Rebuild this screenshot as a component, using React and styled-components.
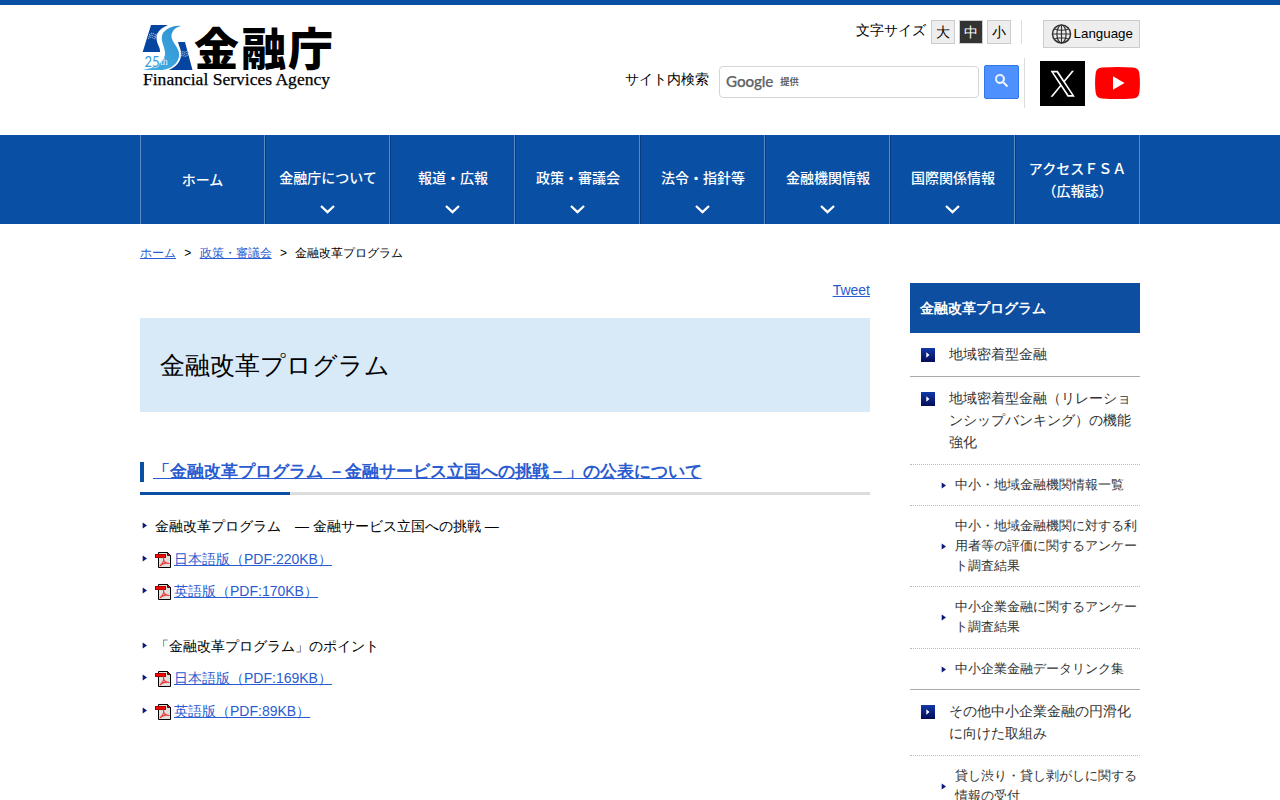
import React from "react";
import styled, { createGlobalStyle, css } from "styled-components";

const GlobalStyle = createGlobalStyle`
  * { box-sizing: border-box; }
  body {
    margin: 0;
    background: #fff;
    color: #000;
    font-family: "Liberation Sans", sans-serif;
    font-size: 14px;
    line-height: 22px;
    height: 800px;
    overflow: hidden;
  }
  ul, h1, h2, p { margin: 0; padding: 0; }
  ul { list-style: none; }
`;

const Page = styled.div`
  border-top: 5px solid #0950a4;
`;

const Container = styled.div`
  width: 1000px;
  margin: 0 auto;
`;

const Header = styled(Container)`
  display: flex;
  justify-content: space-between;
  align-items: flex-start;
  height: 130px;
`;

const Brand = styled.div`
  padding-top: 18px;
  svg { display: block; overflow: visible; }
`;

const HeaderTools = styled.div`
  display: flex;
  flex-direction: column;
  align-items: flex-end;
`;

const SizeRow = styled.div`
  display: flex;
  align-items: flex-start;
  padding-top: 15px;
  height: 53px;
`;

const SizeLabel = styled.span`
  margin-right: 5px;
  line-height: 21px;
`;

const SizeButton = styled.span`
  width: 24px;
  height: 24px;
  margin-right: 4px;
  border: 1px solid #ccc;
  background: ${(p) => (p.$active ? "#333" : "#eee")};
  color: ${(p) => (p.$active ? "#fff" : "#000")};
  text-align: center;
  line-height: 23px;
`;

const Rule = styled.span`
  width: 1px;
  height: ${(p) => p.$h}px;
  background: #ddd;
  margin: 0 ${(p) => p.$right}px 0 ${(p) => p.$left}px;
`;

const LanguageButton = styled.span`
  display: flex;
  align-items: center;
  width: 97px;
  height: 28px;
  padding-left: 7px;
  gap: 1.6px;
  border: 1px solid #ccc;
  background: #eee;
  font-size: 13.33px;
`;

const SearchRow = styled.div`
  display: flex;
  align-items: flex-start;
`;

const SearchLabel = styled.span`
  margin: 10px 10px 0 0;
`;

const SearchField = styled.span`
  display: flex;
  align-items: center;
  width: 260px;
  height: 32px;
  margin: 8px 5px 0 0;
  padding: 0 0 2px 6px;
  gap: 7px;
  border: 1px solid #d6d6d6;
  border-radius: 4px;
  color: #5f6368;
`;

const GoogleWord = styled.span`
  font: 500 15.2px/20px Lato, sans-serif;
  letter-spacing: -0.1px;
  -webkit-text-stroke: 0.25px #5f6368;
`;

const Provided = styled.span`
  font: 700 9.3px/20px "Noto Sans CJK JP", sans-serif;
`;

const SearchButton = styled.span`
  display: flex;
  justify-content: center;
  width: 35px;
  height: 34px;
  margin-top: 7px;
  padding-top: 8px;
  border: 1px solid #3079ed;
  border-radius: 2px;
  background: #4d90fe;
`;

const Social = styled.span`
  width: 45px;
  height: ${(p) => p.$h}px;
  margin: ${(p) => p.$top}px 0 0 ${(p) => p.$left}px;
  svg { display: block; }
`;

const NavBar = styled.nav`
  background: #0950a4;
`;

const NavList = styled.ul`
  display: flex;
  width: 1000px;
  height: 89px;
  margin: 0 auto;
`;

const NavItem = styled.li`
  display: flex;
  flex-direction: column;
  align-items: center;
  width: 125px;
  padding: ${(p) => p.$top}px 0 0 1px;
  border-left: 1px solid #073d7c;
  border-right: 1px solid #5b8ac2;
  color: #fff;
  font-family: "Noto Sans CJK JP", sans-serif;
  font-weight: 500;
  text-align: center;
  white-space: nowrap;
  &:first-child { border-left-color: #5b8ac2; padding-left: 0; }
  &:last-child { padding-left: 0; }
  svg { display: block; margin: 16px 1px 0 0; }
`;

const Link = styled.a`
  color: #2a5bd0;
  text-decoration: underline;
`;

const Breadcrumb = styled(Container)`
  display: flex;
  gap: 8.35px;
  padding-top: 18px;
  height: 59px;
  font-size: 12px;
`;

const Columns = styled(Container)`
  display: flex;
  gap: 40px;
  align-items: flex-start;
`;

const Main = styled.main`
  width: 730px;
`;

const Share = styled.p`
  height: 35px;
  line-height: 14px;
  text-align: right;
`;

const Title = styled.h1`
  height: 94px;
  padding-left: 20px;
  background: #d8e9f7;
  font-size: 25.2px;
  font-weight: 400;
  line-height: 94px;
`;

const SectionTitle = styled.h2`
  height: 45px;
  margin-top: 38px;
  padding-top: 12px;
  background: linear-gradient(to right, #0950a4 150px, #ddd 150px) bottom / 100% 3px no-repeat;
  font-size: 17px;
  line-height: 20px;
`;

const SectionMark = styled.span`
  display: block;
  height: 20px;
  padding-left: 9px;
  border-left: 4px solid #0950a4;
`;

const DocList = styled.ul`
  padding-top: ${(p) => p.$top}px;
`;

const DocItem = styled.li`
  display: flex;
  align-items: flex-start;
  height: 32.5px;
  svg { flex: none; display: block; }
`;

const bulletSpace = {
  doc: css`margin: 7px 8px 0 2px;`,
  side: css`margin: 0 9px 0 0;`,
};

const Bullet = styled.svg`
  flex: none;
  ${(p) => bulletSpace[p.$place]}
`;

const PdfIcon = styled.svg`
  margin: 4px 3px 0 0;
`;

const Sidebar = styled.aside`
  width: 230px;
`;

const SideTitle = styled.p`
  height: 50px;
  padding-left: 10px;
  background: #0d4ea0;
  color: #fff;
  font-weight: 700;
  line-height: 51px;
`;

const SideItem = styled.li`
  display: flex;
  align-items: flex-start;
  padding: 10px 0 0 11px;
  height: ${(p) => p.$h}px;
  border-bottom: 1px ${(p) => (p.$solid ? "solid #aaa" : "dotted #bbb")};
  color: #333;
`;

const SquareMark = styled.svg`
  flex: none;
  margin: 5px 14px 0 0;
`;

const SubItem = styled.li`
  display: flex;
  align-items: flex-start;
  height: ${(p) => p.$h}px;
  padding: 10px 0 0 31px;
  border-bottom: 1px ${(p) => (p.$solid ? "solid #aaa" : "dotted #bbb")};
  color: #333;
  font-size: 13px;
  line-height: 20px;
`;

const SubBody = styled.span`
  display: flex;
  align-items: center;
`;

const Logo = () => (
  <svg width="192" height="68" viewBox="0 0 192 68">
    <defs>
      <linearGradient id="wave" x1="1" y1="0" x2="0" y2="1">
        <stop offset="0" stopColor="#2d91d2" />
        <stop offset="1" stopColor="#45b0e6" />
      </linearGradient>
    </defs>
    <path d="M11 2H28C21 5 16.500 9 16.500 15c0 6 4 9 3.500 14H2.700Z" fill="#0545a0" />
    <path d="M38 19H45L52.500 47H29C38 43 42 36 41 29 40.500 25 38.500 22 38 19Z" fill="#0545a0" />
    <path d="M41 3C34 2 27 5 23 10 19 17 26 25 25 32 23 40 15 45 2.700 47H23C34 45 40 38 39 30 38 23 31 19 31.500 12 32.500 7 36 4 41 3Z" fill="url(#wave)" />
    <g stroke="#b9cdea" strokeWidth="1" fill="none" strokeDasharray="1.500 .6">
      <path d="M9 12q3-3 5-1t5-2" />
      <path d="M8.500 14q3-3 5-1t4-2" />
      <path d="M8 16q3-3 5-1t3-1" />
      <path d="M40 30q3-2 4-1t4-2" />
      <path d="M40 32q3-2 4-1t5-2" />
      <path d="M39 34q3-2 5-1t5-2" />
    </g>
    <text x="4.500" y="43.500" fontFamily="Lato" fontSize="15.500" fill="#2f9cdb" stroke="#fff" strokeWidth="1.200" paintOrder="stroke" textLength="15" lengthAdjust="spacingAndGlyphs">25</text>
    <text x="20" y="42" fontFamily="Liberation Serif" fontSize="10" fill="#e6f5fc">th</text>
    <text x="54" y="43" fontFamily="Noto Sans CJK JP" fontWeight="900" fontSize="45" textLength="139" lengthAdjust="spacing">金融庁</text>
    <text x="3" y="61.500" fontFamily="Liberation Serif" fontSize="17.500" stroke="#000" strokeWidth=".25" textLength="187" lengthAdjust="spacingAndGlyphs">Financial Services Agency</text>
  </svg>
);

const Chevron = () => (
  <svg width="15" height="11" viewBox="0 0 15 11">
    <path d="M1 2 7.500 8.200 14 2" fill="none" stroke="#fff" strokeWidth="2.300" />
  </svg>
);

const Arrow = ({ place }) => (
  <Bullet $place={place} width="5" height="7" viewBox="0 0 5 7">
    <path d="M.7 .5 5 3.500 .7 6.500Z" fill="#0a1a78" />
  </Bullet>
);

const Pdf = () => (
  <PdfIcon width="16" height="16" viewBox="0 0 16 16">
    <path d="M3.500.5H12.500L15.500 3.500V15.500H3.500Z" fill="#e2e0dd" stroke="#000" />
    <path d="M12.500 .5V3.500H15.500Z" fill="#f00" stroke="#000" strokeWidth=".8" />
    <path d="M0 2H11V6H0Z" fill="#a00" />
    <path d="M1 3H10V5H1Z" fill="#f00" />
    <path d="M5 14C8 11 9.500 9 8.500 6.500 8 9 10.500 11.500 14.500 11.500 10 10.500 7 11.500 5 14Z" fill="none" stroke="#e8383d" strokeWidth="1.100" />
  </PdfIcon>
);

const Square = () => (
  <SquareMark width="14" height="14" viewBox="0 0 14 14">
    <defs>
      <linearGradient id="square" x1="0" y1="0" x2="0" y2="1">
        <stop offset="0" stopColor="#1238a8" />
        <stop offset="1" stopColor="#040c58" />
      </linearGradient>
    </defs>
    <path d="M0 0H14V14H0Z" fill="url(#square)" />
    <path d="M5.300 4.300 8.500 7 5.300 9.700Z" fill="#fff" />
  </SquareMark>
);

const nav = ["ホーム", "金融庁について", "報道・広報", "政策・審議会", "法令・指針等", "金融機関情報", "国際関係情報"];

const docs = [
  ["金融改革プログラム　― 金融サービス立国への挑戦 ―", "日本語版（PDF:220KB）", "英語版（PDF:170KB）"],
  ["「金融改革プログラム」のポイント", "日本語版（PDF:169KB）", "英語版（PDF:89KB）"],
];

const side = [
  { text: "地域密着型金融", h: 44, solid: true },
  { text: "地域密着型金融（リレーションシップバンキング）の機能強化", h: 88 },
  { sub: true, text: "中小・地域金融機関情報一覧", h: 41 },
  { sub: true, text: "中小・地域金融機関に対する利用者等の評価に関するアンケート調査結果", h: 81 },
  { sub: true, text: "中小企業金融に関するアンケート調査結果", h: 62 },
  { sub: true, text: "中小企業金融データリンク集", h: 41, solid: true },
  { text: "その他中小企業金融の円滑化に向けた取組み", h: 66 },
  { sub: true, text: "貸し渋り・貸し剥がしに関する情報の受付", h: 61 },
];

export default function App() {
  return (
    <Page>
      <GlobalStyle />
      <Header as="header">
        <Brand><Logo /></Brand>
        <HeaderTools>
          <SizeRow>
            <SizeLabel>文字サイズ</SizeLabel>
            <SizeButton>大</SizeButton>
            <SizeButton $active>中</SizeButton>
            <SizeButton>小</SizeButton>
            <Rule $h={24} $left={6} $right={21} />
            <LanguageButton>
              <svg width="21" height="20" viewBox="0 0 21 20" fill="none" stroke="#333" strokeWidth="1.200">
                <circle cx="10.500" cy="10" r="9" strokeWidth="1.500" />
                <ellipse cx="10.500" cy="10" rx="4.600" ry="9" />
                <path d="M10.500 1V19M1.500 10H19.500M3.500 5Q10.500 7.500 17.500 5M3.500 15Q10.500 12.500 17.500 15" />
              </svg>
              Language
            </LanguageButton>
          </SizeRow>
          <SearchRow>
            <SearchLabel>サイト内検索</SearchLabel>
            <SearchField>
              <GoogleWord>Google</GoogleWord>
              <Provided>提供</Provided>
            </SearchField>
            <SearchButton>
              <svg width="13" height="13" viewBox="0 0 13 13">
                <path d="M9.300 8.200H8.700L8.500 8A4.700 4.700 0 1 0 8 8.500l.2.200v.6L11.800 12.900 12.900 11.800ZM4.900 8.200A3.300 3.300 0 1 1 4.900 1.600a3.300 3.300 0 0 1 0 6.600Z" fill="#fff" stroke="#fff" strokeWidth=".5" />
              </svg>
            </SearchButton>
            <Rule $h={50} $left={5} $right={0} />
            <Social $h={45} $top={3} $left={15}>
              <svg width="45" height="45" viewBox="0 0 45 45">
                <path d="M0 0H45V45H0Z" />
                <path transform="translate(10.500 9.700) scale(.0203 .0212)" fill="#fff" d="M714.163 519.284 1160.890 0H1055.030L667.137 450.887 357.328 0H0L468.492 681.821 0 1226.370H105.866L515.491 750.218 842.672 1226.370H1200L714.137 519.284ZM569.165 687.828 521.697 619.934 144.011 79.694H306.615L611.412 515.685 658.880 583.579 1055.080 1150.300H892.476L569.165 687.854Z" />
              </svg>
            </Social>
            <Social $h={32} $top={9} $left={10}>
              <svg width="45" height="32" viewBox="0 0 45 32">
                <path d="M7 .6Q22.500-.6 38 .6 43.500.8 44.300 6 45.600 16 44.300 26 43.500 31.200 38 31.400 22.500 32.600 7 31.400 1.500 31.200.7 26-.6 16 .7 6 1.500.8 7 .6Z" fill="#f00" />
                <path d="M18 9.300 29.500 16 18 22.700Z" fill="#fff" />
              </svg>
            </Social>
          </SearchRow>
        </HeaderTools>
      </Header>
      <NavBar>
        <NavList>
          {nav.map((label, i) => (
            <NavItem key={label} $top={i ? 31 : 33}>
              {label}
              {i > 0 && <Chevron />}
            </NavItem>
          ))}
          <NavItem $top={22}>アクセスＦＳＡ<br />（広報誌）</NavItem>
        </NavList>
      </NavBar>
      <Breadcrumb>
        <Link>ホーム</Link>
        <span>&gt;</span>
        <Link>政策・審議会</Link>
        <span>&gt;</span>
        <span>金融改革プログラム</span>
      </Breadcrumb>
      <Columns>
        <Main>
          <Share><Link>Tweet</Link></Share>
          <Title>金融改革プログラム</Title>
          <SectionTitle>
            <SectionMark>
              <Link>「金融改革プログラム －金融サービス立国への挑戦－」の公表について</Link>
            </SectionMark>
          </SectionTitle>
          {docs.map((group, g) => (
            <DocList key={g} $top={g ? 22 : 20}>
              {group.map((text, i) => (
                <DocItem key={text}>
                  <Arrow place="doc" />
                  {i > 0 && <Pdf />}
                  {i > 0 ? <Link>{text}</Link> : <span>{text}</span>}
                </DocItem>
              ))}
            </DocList>
          ))}
        </Main>
        <Sidebar>
          <SideTitle>金融改革プログラム</SideTitle>
          <ul>
            {side.map((s) =>
              s.sub ? (
                <SubItem key={s.text} $h={s.h} $solid={s.solid}>
                  <SubBody>
                    <Arrow place="side" />
                    <span>{s.text}</span>
                  </SubBody>
                </SubItem>
              ) : (
                <SideItem key={s.text} $h={s.h} $solid={s.solid}>
                  <Square />
                  <span>{s.text}</span>
                </SideItem>
              )
            )}
          </ul>
        </Sidebar>
      </Columns>
    </Page>
  );
}
